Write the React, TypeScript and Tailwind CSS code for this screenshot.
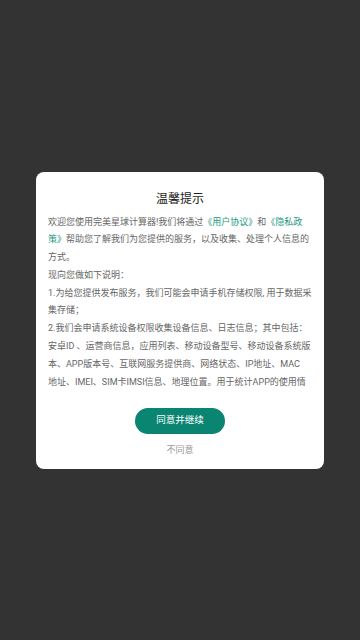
const link = "text-[#1a9884]";

export default function App() {
  return (
    <div
      className="h-[640px] w-full bg-[#333333] flex items-center justify-center"
      style={{ fontFamily: 'Roboto, "Noto Sans CJK SC", sans-serif' }}
    >
      <div className="w-[288px] bg-white rounded-[8px] pt-[18px] pb-[12px] flex flex-col items-center">
        <h1 className="text-[12px] leading-[18px] text-[#222222]">温馨提示</h1>

        {/* scrollable agreement text, clipped; lines broken as on device */}
        <div className="mt-[6px] w-full px-[12px] h-[178px] overflow-hidden text-[9px] leading-[17.8px] text-[#666666] whitespace-nowrap">
          <div>
            欢迎您使用完美星球计算器!我们将通过<span className={link}>《用户协议》</span>和
            <span className={link}>《隐私政</span>
          </div>
          <div>
            <span className={link}>策》</span>帮助您了解我们为您提供的服务，以及收集、处理个人信息的
          </div>
          <div>方式。</div>
          <div>现向您做如下说明：</div>
          <div>1.为给您提供发布服务，我们可能会申请手机存储权限, 用于数据采</div>
          <div>集存储；</div>
          <div>2.我们会申请系统设备权限收集设备信息、日志信息；其中包括：</div>
          <div>安卓ID 、运营商信息，应用列表、移动设备型号、移动设备系统版</div>
          <div>本、APP版本号、互联网服务提供商、网络状态、IP地址、MAC</div>
          <div>地址、IMEI、SIM卡IMSI信息、地理位置。用于统计APP的使用情</div>
          <div>况，保障您的账号安全。</div>
        </div>

        <button className="mt-[16px] w-[90px] h-[26px] rounded-full bg-[#0a8572] text-white text-[9.5px]">
          同意并继续
        </button>
        <button className="mt-[9px] text-[9px] leading-[14px] text-[#999999]">不同意</button>
      </div>
    </div>
  );
}
